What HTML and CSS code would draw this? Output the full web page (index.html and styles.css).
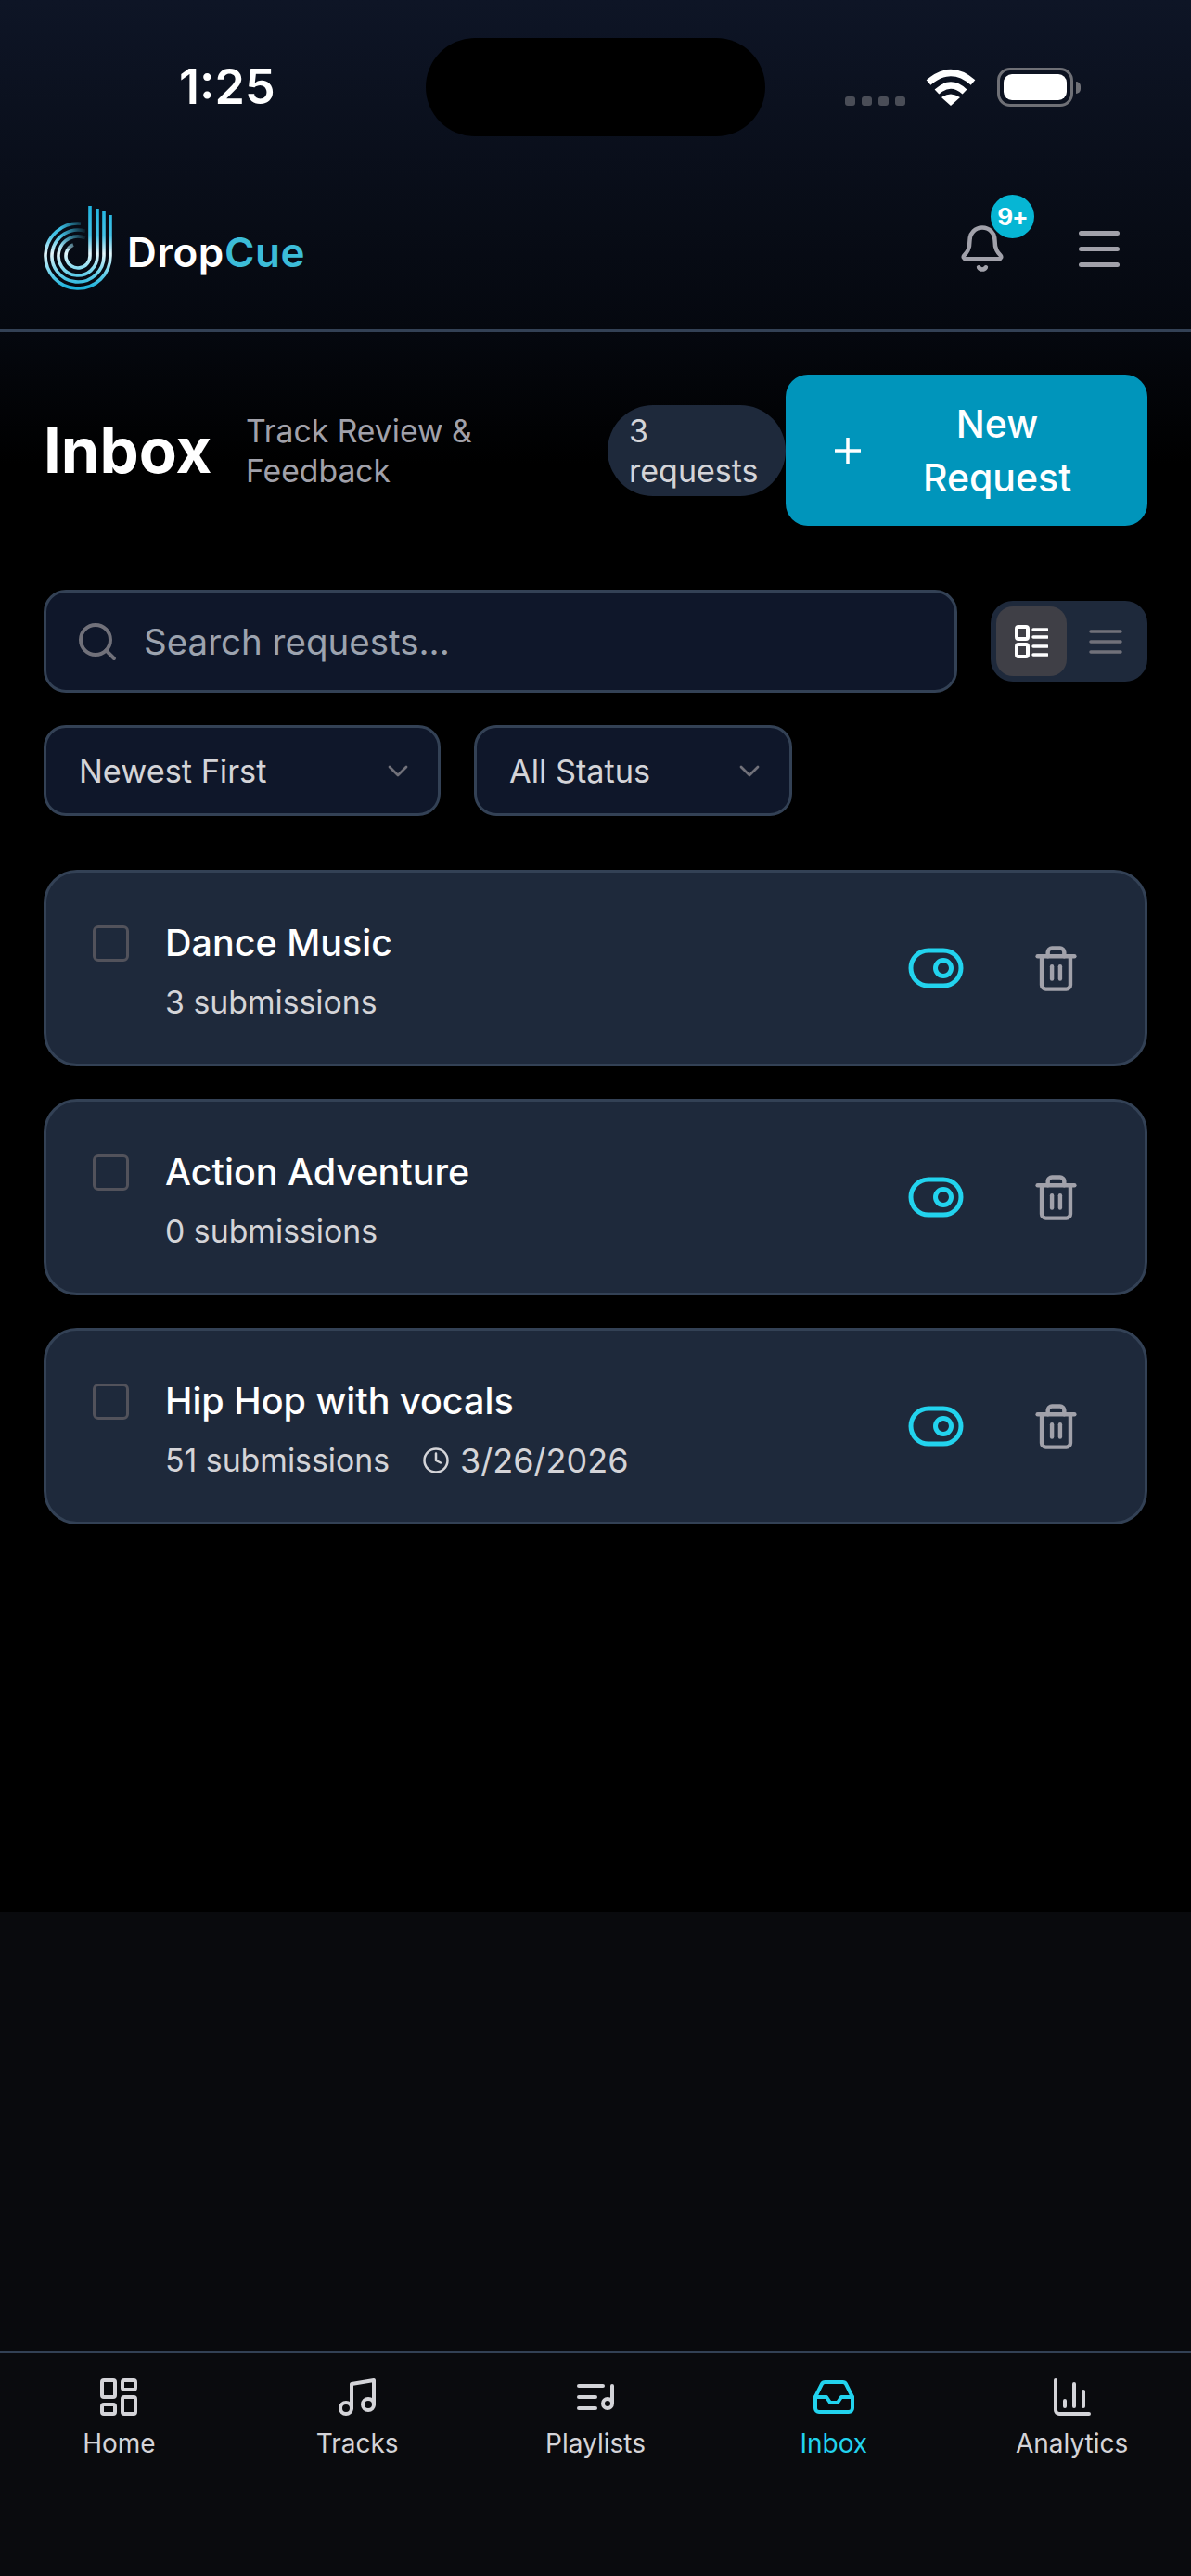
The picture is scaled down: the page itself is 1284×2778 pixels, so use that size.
FILE: index.html
```html
<!DOCTYPE html>
<html lang="en">
<head>
<meta charset="utf-8">
<title>DropCue Inbox</title>
<link rel="stylesheet" href="styles.css">
</head>
<body>
<div class="screen">
  <div class="stage">
    <header class="top">
      <div class="status">
        <span class="time">1:25</span>
        <span class="island"></span>
        <div class="sys">
          <span class="dots"><i></i><i></i><i></i><i></i></span>
          <svg class="wifi" width="56" height="40" viewBox="0 0 56 40"><path d="M4 15Q28 -6 52 15M13 25Q28 11 43 25" fill="none" stroke="#fff" stroke-width="7"/><path d="M28 40L18 31Q28 24 38 31Z" fill="#fff"/></svg>
          <span class="battery"><span class="charge"></span></span>
          <span class="nub"></span>
        </div>
      </div>
      <div class="brand-row">
        <div class="brand">
          <svg class="logo" width="76" height="92" viewBox="0 0 76 92">
            <defs>
              <linearGradient id="lg" gradientUnits="userSpaceOnUse" x1="0" y1="0" x2="0" y2="92">
                <stop offset="0" stop-color="#1fb4e0"/><stop offset=".35" stop-color="#45c2e6"/><stop offset=".56" stop-color="#e4f6fb"/><stop offset=".75" stop-color="#7fd8ee"/><stop offset=".95" stop-color="#1fb3dc"/>
              </linearGradient>
              <linearGradient id="fade" gradientUnits="userSpaceOnUse" x1="18" y1="0" x2="46" y2="0">
                <stop offset="0" stop-color="#000" stop-opacity="0"/><stop offset="1" stop-color="#000" stop-opacity=".95"/>
              </linearGradient>
              <mask id="tails" maskUnits="userSpaceOnUse" x="0" y="0" width="76" height="92">
                <rect width="76" height="92" fill="#fff"/>
                <rect x="18" y="0" width="30" height="46" fill="url(#fade)"/>
              </mask>
            </defs>
            <g fill="none" stroke="url(#lg)" stroke-width="3.6" mask="url(#tails)">
              <path d="M72 10V54A35 35 0 1 1 40 19.2"/>
              <path d="M65 6V54A28 28 0 1 1 45 27.2"/>
              <path d="M58 3V54A21 21 0 1 1 45 34.6"/>
              <path d="M50 0V54A13 13 0 1 1 32 42"/>
            </g>
          </svg>
          <span class="wordmark">Drop<span class="cue">Cue</span></span>
        </div>
        <div class="top-actions">
          <span class="bell-wrap">
            <svg class="ic bell" width="54" height="54" viewBox="0 0 24 24"><path d="M10.268 21a2 2 0 0 0 3.464 0"/><path d="M3.262 15.326A1 1 0 0 0 4 17h16a1 1 0 0 0 .74-1.673C19.41 13.956 18 12.499 18 8A6 6 0 0 0 6 8c0 4.499-1.411 5.956-2.738 7.326"/></svg>
            <span class="badge">9+</span>
          </span>
          <span class="burger"><i></i><i></i><i></i></span>
        </div>
      </div>
    </header>
    <main class="content">
      <section class="title-row">
        <h1 class="title">Inbox</h1>
        <p class="subtitle">Track Review &amp; Feedback</p>
        <span class="count">3 requests</span>
        <button class="new-btn">
          <svg class="plus" width="28" height="28" viewBox="0 0 28 28"><path d="M14 0V28M0 14H28" stroke="#fff" stroke-width="3.5" stroke-linecap="round"/></svg>
          <span class="new-label">New Request</span>
        </button>
      </section>
      <section class="search-row">
        <div class="search">
          <svg class="ic search-ic" width="48" height="48" viewBox="0 0 24 24"><circle cx="11" cy="11" r="8"/><path d="M21 21l-4.35-4.35"/></svg>
          <span class="placeholder">Search requests...</span>
        </div>
        <div class="view-toggle">
          <span class="view active">
            <svg width="36" height="36" viewBox="0 0 36 36" fill="none" stroke="#fff" stroke-width="4"><rect x="2" y="2" width="12" height="13" rx="2"/><rect x="2" y="21" width="12" height="13" rx="2"/><path d="M20 5H35M20 13H35M20 23H35M20 32H35" stroke-width="3.5" stroke-linecap="round"/></svg>
          </span>
          <span class="view">
            <svg width="36" height="28" viewBox="0 0 36 28" fill="none" stroke="#71717a" stroke-width="3.5" stroke-linecap="round"><path d="M2 3H34M2 14H34M2 25H34"/></svg>
          </span>
        </div>
      </section>
      <section class="filter-row">
        <div class="select w1"><span>Newest First</span><svg class="chev" width="22" height="13" viewBox="0 0 22 13"><path d="M2 2L11 11L20 2"/></svg></div>
        <div class="select w2"><span>All Status</span><svg class="chev" width="22" height="13" viewBox="0 0 22 13"><path d="M2 2L11 11L20 2"/></svg></div>
      </section>
      <section class="cards">
        <article class="card">
          <span class="check"></span>
          <div class="info"><h2 class="name">Dance Music</h2><div class="meta"><span>3 submissions</span></div></div>
          <div class="actions">
            <svg class="tog" width="60" height="44" viewBox="0 0 60 44"><rect x="3" y="3" width="54" height="38" rx="19"/><circle cx="38" cy="22" r="8.5"/></svg>
            <svg class="ic trash" width="53" height="53" viewBox="0 0 24 24"><path d="M3 6h18"/><path d="M19 6v14c0 1-1 2-2 2H7c-1 0-2-1-2-2V6"/><path d="M8 6V4c0-1 1-2 2-2h4c1 0 2 1 2 2v2"/><path d="M10 11v6"/><path d="M14 11v6"/></svg>
          </div>
        </article>
        <article class="card">
          <span class="check"></span>
          <div class="info"><h2 class="name">Action Adventure</h2><div class="meta"><span>0 submissions</span></div></div>
          <div class="actions">
            <svg class="tog" width="60" height="44" viewBox="0 0 60 44"><rect x="3" y="3" width="54" height="38" rx="19"/><circle cx="38" cy="22" r="8.5"/></svg>
            <svg class="ic trash" width="53" height="53" viewBox="0 0 24 24"><path d="M3 6h18"/><path d="M19 6v14c0 1-1 2-2 2H7c-1 0-2-1-2-2V6"/><path d="M8 6V4c0-1 1-2 2-2h4c1 0 2 1 2 2v2"/><path d="M10 11v6"/><path d="M14 11v6"/></svg>
          </div>
        </article>
        <article class="card">
          <span class="check"></span>
          <div class="info"><h2 class="name">Hip Hop with vocals</h2><div class="meta"><span>51 submissions</span>
            <span class="date"><svg class="ic clock" width="30" height="30" viewBox="0 0 24 24"><circle cx="12" cy="12" r="10"/><path d="M12 6v6l4 2"/></svg>3/26/2026</span></div></div>
          <div class="actions">
            <svg class="tog" width="60" height="44" viewBox="0 0 60 44"><rect x="3" y="3" width="54" height="38" rx="19"/><circle cx="38" cy="22" r="8.5"/></svg>
            <svg class="ic trash" width="53" height="53" viewBox="0 0 24 24"><path d="M3 6h18"/><path d="M19 6v14c0 1-1 2-2 2H7c-1 0-2-1-2-2V6"/><path d="M8 6V4c0-1 1-2 2-2h4c1 0 2 1 2 2v2"/><path d="M10 11v6"/><path d="M14 11v6"/></svg>
          </div>
        </article>
      </section>
    </main>
  </div>
  <div class="filler"></div>
  <nav class="tabs">
    <a class="tab"><svg class="ic" width="48" height="48" viewBox="0 0 24 24"><rect x="3" y="3" width="7" height="9" rx="1"/><rect x="14" y="3" width="7" height="5" rx="1"/><rect x="14" y="12" width="7" height="9" rx="1"/><rect x="3" y="16" width="7" height="5" rx="1"/></svg><span>Home</span></a>
    <a class="tab"><svg class="ic" width="48" height="48" viewBox="0 0 24 24"><path d="M9 18V5l12-2v13"/><circle cx="6" cy="18" r="3"/><circle cx="18" cy="16" r="3"/></svg><span>Tracks</span></a>
    <a class="tab"><svg class="ic" width="48" height="48" viewBox="0 0 24 24"><path d="M21 15V6"/><path d="M18.5 18a2.5 2.5 0 1 0 0-5 2.5 2.5 0 0 0 0 5Z"/><path d="M12 12H3"/><path d="M16 6H3"/><path d="M12 18H3"/></svg><span>Playlists</span></a>
    <a class="tab current"><svg class="ic" width="48" height="48" viewBox="0 0 24 24"><path d="M22 12h-6l-2 3h-4l-2-3H2"/><path d="M5.45 5.11 2 12v6a2 2 0 0 0 2 2h16a2 2 0 0 0 2-2v-6l-3.45-6.89A2 2 0 0 0 16.76 4H7.24a2 2 0 0 0-1.79 1.11z"/></svg><span>Inbox</span></a>
    <a class="tab"><svg class="ic" width="48" height="48" viewBox="0 0 24 24"><path d="M3 3v16a2 2 0 0 0 2 2h16"/><path d="M18 17V9"/><path d="M13 17V5"/><path d="M8 17v-3"/></svg><span>Analytics</span></a>
  </nav>
</div>
</body>
</html>
```

FILE: styles.css
```css
* { box-sizing: border-box; }
html, body { margin: 0; padding: 0; background: #090a0d; }
body { font-family: Inter, "Liberation Sans", sans-serif; color: #fff; }
.screen { width: 1284px; height: 2778px; display: flex; flex-direction: column; overflow: hidden; }
.stage { height: 2062px; background: linear-gradient(#0e1526 0, #05080f 355px, #000 500px); }
.filler { flex: 1; background: #090a0d; }

.ic { fill: none; stroke: currentColor; stroke-width: 2; stroke-linecap: round; stroke-linejoin: round; flex: none; }

.top { height: 358px; border-bottom: 3px solid #334155; }
.status { height: 188px; display: flex; align-items: center; padding-left: 193px; }
.time { width: 102px; font-size: 52px; font-weight: 600; line-height: 1; white-space: nowrap; }
.island { width: 366px; height: 106px; margin-left: 164px; border-radius: 53px; background: #000; }
.sys { display: flex; align-items: center; margin-left: 86px; height: 42px; }
.dots { display: flex; gap: 7px; align-self: flex-end; margin-bottom: 1px; }
.dots i { width: 11px; height: 10px; border-radius: 3px; background: #4a4d57; }
.wifi { margin-left: 21px; }
.battery { width: 82px; height: 42px; margin-left: 22px; padding: 4px; border: 3px solid #6f7076; border-radius: 14px; display: flex; }
.charge { flex: 1; background: #fff; border-radius: 9px; }
.nub { width: 5px; height: 13px; margin-left: 3px; background: #6f7076; border-radius: 0 5px 5px 0; }

.brand-row { height: 167px; display: flex; align-items: center; justify-content: space-between; padding: 0 77px 7px 47px; }
.brand { display: flex; align-items: center; gap: 14px; }
.wordmark { font-size: 44px; font-weight: 600; line-height: 1; margin-top: 7px; letter-spacing: .6px; }
.cue { color: #3cbcd8; }
.top-actions { display: flex; align-items: center; gap: 77px; }
.bell-wrap { position: relative; display: flex; color: #a1a1aa; }
.badge { position: absolute; left: 36px; top: -31px; width: 47px; height: 47px; border-radius: 50%; background: #06b6d4; color: #fff; font-size: 26px; font-weight: 700; letter-spacing: -1px; display: flex; align-items: center; justify-content: center; }
.burger { width: 44px; display: flex; flex-direction: column; gap: 12px; }
.burger i { height: 5px; border-radius: 3px; background: #a1a1aa; }

.content { padding: 46px 47px 0; }
.title-row { display: flex; align-items: center; height: 163px; }
.title { margin: 0; width: 218px; font-size: 67px; font-weight: 700; line-height: 1; }
.subtitle { margin: 0; width: 300px; padding-right: 30px; font-size: 33.7px; line-height: 43px; color: #a1a1aa; }
.count { width: 192px; margin-left: 90px; padding: 6px 20px 6px 23px; border-radius: 50px; background: #1e293b; color: #d4d4d8; font-size: 34px; line-height: 43px; }
.new-btn { width: 390px; height: 163px; flex: none; display: flex; align-items: center; gap: 32px; padding: 0 47px 0 53px; border: 0; border-radius: 24px; background: #0095bb; color: #fff; font: inherit; }
.plus { flex: none; }
.new-label { flex: 1; font-size: 41px; font-weight: 500; line-height: 58px; text-align: center; }

.search-row { display: flex; align-items: center; gap: 36px; margin-top: 69px; }
.search { flex: 1; height: 111px; display: flex; align-items: center; gap: 26px; padding-left: 31px; background: #0f172a; border: 3px solid #334155; border-radius: 24px; color: #9ca3af; }
.search-ic { color: #71717a; }
.placeholder { font-size: 38.5px; }
.view-toggle { width: 169px; height: 87px; flex: none; display: flex; align-items: center; padding: 0 6px; background: #1e293b; border-radius: 24px; }
.view { width: 76px; height: 75px; display: flex; align-items: center; justify-content: center; border-radius: 18px; }
.view.active { background: #3f3f46; }
.view + .view { flex: 1; width: auto; padding-left: 2px; }

.filter-row { display: flex; gap: 36px; margin-top: 35px; }
.select { height: 98px; display: flex; align-items: center; justify-content: space-between; padding: 0 32px 0 35px; background: #0f172a; border: 3px solid #334155; border-radius: 24px; color: #d4d4d8; font-size: 34.3px; }
.w1 { width: 428px; }
.w2 { width: 343px; }
.chev { fill: none; stroke: #71717a; stroke-width: 2.8; stroke-linecap: round; stroke-linejoin: round; }

.cards { display: flex; flex-direction: column; gap: 35px; margin-top: 58px; }
.card { height: 212px; display: flex; align-items: flex-start; padding: 46px 69px 0 50px; background: #1e293b; border: 3px solid #334155; border-radius: 36px; }
.check { width: 39px; height: 39px; margin-top: 11px; flex: none; border: 3px solid #52525b; border-radius: 6px; }
.info { flex: 1; margin-left: 39px; }
.name { margin: 0; font-size: 39.5px; font-weight: 500; line-height: 60px; }
.meta { display: flex; align-items: center; gap: 35px; margin-top: 12px; font-size: 33.8px; line-height: 44px; color: #d4d4d8; }
.date { display: flex; align-items: center; gap: 11px; font-size: 36px; }
.actions { display: flex; align-items: center; gap: 73px; align-self: center; margin-top: -46px; }
.tog { flex: none; fill: none; stroke: #22d3ee; stroke-width: 5; }
.trash { color: #a1a1aa; }

.tabs { height: 243px; display: flex; padding-top: 23px; border-top: 3px solid #334155; background: #0a0b0e; }
.tab { flex: 1; display: flex; flex-direction: column; align-items: center; gap: 8px; color: #d4d4d8; font-size: 28px; line-height: 36px; }
.tab.current { color: #22d3ee; }
```
